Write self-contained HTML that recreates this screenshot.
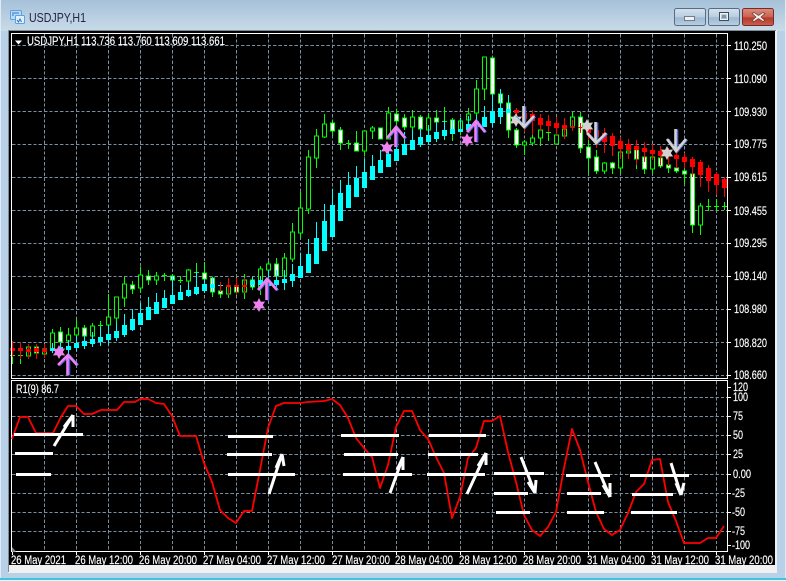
<!DOCTYPE html>
<html><head><meta charset="utf-8"><title>USDJPY,H1</title>
<style>
html,body{margin:0;padding:0;background:#b9d1e8;width:786px;height:581px;overflow:hidden}
svg{position:absolute;left:0;top:0;display:block}
text{font-family:"Liberation Sans",sans-serif;fill:#fff;font-size:11.5px;stroke:#fff;stroke-width:.15px}
</style></head><body>
<svg width="786" height="581" viewBox="0 0 786 581" xmlns="http://www.w3.org/2000/svg">
<defs>
<linearGradient id="bg" x1="0" y1="0" x2="0" y2="1"><stop offset="0" stop-color="#a6c1d9"/><stop offset="1" stop-color="#c9dbe9"/></linearGradient>
<linearGradient id="bn" x1="0" y1="0" x2="0" y2="1"><stop offset="0" stop-color="#d5e2ee"/><stop offset=".5" stop-color="#b7cde0"/><stop offset=".55" stop-color="#9db8d0"/><stop offset="1" stop-color="#b9d0e3"/></linearGradient>
<linearGradient id="cl" x1="0" y1="0" x2="0" y2="1"><stop offset="0" stop-color="#dc8d80"/><stop offset=".5" stop-color="#c9624f"/><stop offset=".55" stop-color="#b5392c"/><stop offset="1" stop-color="#c8604c"/></linearGradient>
<path id="s" d="M0-7 1.900-3.300 6.100-3.500 3.800 0 6.100 3.500 1.900 3.300 0 7-1.900 3.300-6.100 3.500-3.800 0-6.100-3.500-1.900-3.300Z"/>
</defs>
<rect width="786" height="581" fill="#b9d1e8"/>
<rect width="786" height="31" fill="url(#bg)"/>
<rect x="0" y="0" width="1" height="578" fill="#dfeaf3"/>
<rect x="785" y="0" width="1" height="578" fill="#dfeaf3"/>
<rect x="0" y="578" width="786" height="3" fill="#3cc6d8"/>
<rect x="0" y="580" width="786" height="1" fill="#e8f4f8"/>
<rect x="8" y="30" width="769" height="543" fill="#f0f0f0"/>
<rect x="8" y="30" width="768" height="1" fill="#7e8a96"/>
<rect x="8" y="30" width="1" height="542" fill="#7e8a96"/>
<rect x="9" y="31" width="766" height="534" fill="#000"/>

<!-- title -->
<g>
<rect x="10.500" y="10.500" width="11" height="9" rx="1" fill="#b9dcf6" stroke="#5f9fe0"/>
<rect x="15.500" y="15.500" width="9" height="8" rx="1" fill="#dff0fc" stroke="#5f9fe0"/>
<path d="M12 13h7M12 15h2M17 20l1.500 2 1.500-3 1.500 3" stroke="#2f6fd0" fill="none"/>
</g>
<text x="29" y="22" textLength="57" lengthAdjust="spacingAndGlyphs" style="font-size:12.500px;fill:#252347;stroke:none">USDJPY,H1</text>

<!-- buttons -->
<rect x="674.500" y="8.500" width="31" height="17" rx="2" fill="url(#bn)" stroke="#5b6c80"/>
<rect x="684.500" y="16.500" width="10" height="4" fill="#eef2f6" stroke="#5b6670" stroke-width=".8"/>
<rect x="708.500" y="8.500" width="31" height="17" rx="2" fill="url(#bn)" stroke="#5b6c80"/>
<rect x="719.500" y="12.500" width="9" height="8" fill="none" stroke="#3e4a56" stroke-width="1"/>
<rect x="720.500" y="13.500" width="7" height="6" fill="none" stroke="#eef2f6" stroke-width="1"/>
<rect x="722" y="15" width="4" height="3" fill="#7f95aa"/>
<rect x="742.500" y="8.500" width="31" height="17" rx="2" fill="url(#cl)" stroke="#7a2a25"/>
<path d="M754 12.500l4.500 3 4.500-3 2 1-4 3.500 4 3.500-2 1-4.500-3-4.500 3-2-1 4-3.500-4-3.500Z" fill="#f4f0ee" stroke="#6e3430" stroke-width=".7"/>

<!-- grid -->
<g stroke="#7b8da0" stroke-width="1" stroke-dasharray="3.330 2" fill="none" shape-rendering="crispEdges">
<path d="M12 45.500H728M12 78.500H728M12 111.500H728M12 144.500H728M12 177.500H728M12 210.500H728M12 243.500H728M12 276.500H728M12 309.500H728M12 342.500H728M12 375.500H728"/>
<path d="M44.500 34V378M76.500 34V378M108.500 34V378M140.500 34V378M172.500 34V378M204.500 34V378M236.500 34V378M268.500 34V378M300.500 34V378M332.500 34V378M364.500 34V378M396.500 34V378M428.500 34V378M460.500 34V378M492.500 34V378M524.500 34V378M556.500 34V378M588.500 34V378M620.500 34V378M652.500 34V378M684.500 34V378M716.500 34V378"/>
<path d="M12 397.500H728M12 416.500H728M12 435.500H728M12 454.500H728M12 474.500H728M12 493.500H728M12 512.500H728M12 531.500H728"/>
<path d="M44.500 381V551M76.500 381V551M108.500 381V551M140.500 381V551M172.500 381V551M204.500 381V551M236.500 381V551M268.500 381V551M300.500 381V551M332.500 381V551M364.500 381V551M396.500 381V551M428.500 381V551M460.500 381V551M492.500 381V551M524.500 381V551M556.500 381V551M588.500 381V551M620.500 381V551M652.500 381V551M684.500 381V551M716.500 381V551"/>
</g>

<!-- real candles -->
<g shape-rendering="crispEdges">
<path fill="none" stroke="#0f0" d="M12.500 350V364M20.500 352V364M28.500 344V359M36.500 344V359M44.500 344V358M52.500 329V352M60.500 327V345M68.500 328V345M76.500 319V340M84.500 325V340M92.500 323V340M100.500 321V335M108.500 294V330M116.500 297V325M124.500 277V307M132.500 281V294M140.500 267V293M148.500 270V285M156.500 272V285M164.500 273V281M172.500 274V285M180.500 276V283M188.500 269V283M196.500 263V285M204.500 262V290M212.500 277V297M220.500 287V298M228.500 278V298M236.500 277V296M244.500 274V299M252.500 277V290M260.500 266V295M268.500 261V275M276.500 258V280M284.500 253V280M292.500 223V262M300.500 192V238M308.500 150V214M316.500 129V168M324.500 114V138M332.500 120V136M340.500 127V150M348.500 140V149M356.500 131V151M364.500 131V156M372.500 126V139M380.500 128V139M388.500 107V139M396.500 109V125M404.500 114V130M412.500 110V130M420.500 115V135M428.500 113V140M436.500 110V125M444.500 107V140M452.500 118V141M460.500 118V135M468.500 108V130M476.500 80V120M484.500 57V100M492.500 57V100M500.500 89V110M508.500 95V138M516.500 128V148M524.500 140V155M532.500 135V146M540.500 125V146M548.500 127V141M556.500 120V144M564.500 125V138M572.500 112V131M580.500 112V153M588.500 140V173M596.500 150V174M604.500 162V174M612.500 162V174M620.500 145V174M628.500 145V155M636.500 150V169M644.500 155V174M652.500 155V174M660.500 157V168M668.500 163V173M676.500 166V173M684.500 169V184M692.500 172V233M700.500 203V235M708.500 199V211M716.500 199V211M724.500 202V210 M10 355.500H15M18 355.500H23M98 325.500H103M162 275.500H167M178 280.500H183M194 272.500H199M346 143.500H351M442 121.500H447M546 132.500H551M706 206.500H711M714 206.500H719M722 206.500H727"/>
<path fill="#000" stroke="#0f0" d="M26.500 347h4v9h-4zM42.500 349h4v5h-4zM50.500 333h4v16h-4zM66.500 335h4v6h-4zM74.500 328h4v7h-4zM90.500 326h4v10h-4zM106.500 317h4v8h-4zM114.500 297h4v21h-4zM122.500 284h4v14h-4zM138.500 275h4v13h-4zM154.500 276h4v4h-4zM186.500 270h4v11h-4zM226.500 286h4v8h-4zM242.500 280h4v12h-4zM258.500 269h4v18h-4zM266.500 264h4v6h-4zM282.500 258h4v18h-4zM290.500 232h4v27h-4zM298.500 208h4v25h-4zM306.500 157h4v52h-4zM314.500 136h4v22h-4zM322.500 124h4v13h-4zM362.500 131h4v20h-4zM370.500 128h4v3h-4zM386.500 113h4v26h-4zM410.500 117h4v10h-4zM426.500 118h4v12h-4zM458.500 121h4v9h-4zM466.500 114h4v6h-4zM474.500 89h4v24h-4zM482.500 57h4v32h-4zM522.500 142h4v3h-4zM530.500 138h4v5h-4zM538.500 130h4v8h-4zM554.500 135h4v9h-4zM562.500 129h4v7h-4zM570.500 117h4v10h-4zM602.500 163h4v8h-4zM618.500 152h4v16h-4zM626.500 151h4v2h-4zM650.500 157h4v12h-4zM698.500 206h4v19h-4z"/>
<path fill="#fff" stroke="#0f0" d="M34.500 347h4v6h-4zM58.500 332h4v10h-4zM82.500 328h4v8h-4zM130.500 285h4v4h-4zM146.500 276h4v4h-4zM170.500 276h4v4h-4zM202.500 273h4v6h-4zM210.500 278h4v14h-4zM218.500 291h4v3h-4zM234.500 286h4v6h-4zM250.500 280h4v7h-4zM274.500 264h4v12h-4zM330.500 123h4v8h-4zM338.500 130h4v13h-4zM354.500 143h4v8h-4zM378.500 128h4v11h-4zM394.500 114h4v7h-4zM402.500 118h4v9h-4zM418.500 117h4v12h-4zM434.500 118h4v4h-4zM450.500 120h4v10h-4zM490.500 58h4v36h-4zM498.500 94h4v9h-4zM506.500 103h4v27h-4zM514.500 130h4v15h-4zM578.500 117h4v31h-4zM586.500 147h4v11h-4zM594.500 157h4v14h-4zM610.500 163h4v5h-4zM634.500 150h4v9h-4zM642.500 157h4v12h-4zM658.500 158h4v8h-4zM666.500 165h4v3h-4zM674.500 168h4v3h-4zM682.500 171h4v3h-4zM690.500 174h4v51h-4z"/>

<!-- HA cyan -->
<path fill="none" stroke="#0ff" d="M52.500 343V353M60.500 343V356M68.500 340V356M76.500 336V351M84.500 335V349M92.500 332V347M100.500 327V346M108.500 325V345M116.500 322V341M124.500 314V337M132.500 309V331M140.500 303V325M148.500 297V320M156.500 293V314M164.500 290V308M172.500 276V304M180.500 285V300M188.500 283V297M196.500 272V295M204.500 279V293M212.500 277V292M252.500 277V288M260.500 276V288M268.500 270V288M276.500 270V290M284.500 270V290M292.500 264V287M300.500 253V278M308.500 239V273M316.500 222V264M324.500 204V251M332.500 189V237M340.500 180V221M348.500 172V208M356.500 166V197M364.500 159V188M372.500 155V180M380.500 150V173M388.500 145V167M396.500 140V161M404.500 132V155M412.500 130V150M420.500 128V147M428.500 125V145M436.500 122V142M444.500 120V139M452.500 120V134M460.500 118V132M468.500 116V130M476.500 115V127M484.500 106V127M492.500 94V127M500.500 89V124M508.500 95V113"/>
<path fill="#0ff" d="M50 348h5v3h-5zM58 347h5v4h-5zM66 346h5v4h-5zM74 343h5v5h-5zM82 341h5v5h-5zM90 339h5v5h-5zM98 337h5v5h-5zM106 334h5v6h-5zM114 331h5v7h-5zM122 325h5v10h-5zM130 319h5v11h-5zM138 313h5v12h-5zM146 307h5v13h-5zM154 302h5v12h-5zM162 298h5v10h-5zM170 295h5v9h-5zM178 292h5v8h-5zM186 290h5v6h-5zM194 287h5v7h-5zM202 284h5v7h-5zM210 284h5v4h-5zM218 285h5v1h-5zM250 281h5v4h-5zM258 280h5v5h-5zM266 282h5v4h-5zM274 280h5v5h-5zM282 279h5v4h-5zM290 274h5v7h-5zM298 266h5v12h-5zM306 254h5v19h-5zM314 238h5v26h-5zM322 221h5v30h-5zM330 205h5v32h-5zM338 193h5v28h-5zM346 185h5v23h-5zM354 178h5v19h-5zM362 172h5v16h-5zM370 166h5v14h-5zM378 160h5v13h-5zM386 154h5v13h-5zM394 149h5v12h-5zM402 144h5v11h-5zM410 140h5v10h-5zM418 137h5v8h-5zM426 135h5v7h-5zM434 132h5v7h-5zM442 130h5v6h-5zM450 129h5v5h-5zM458 129h5v3h-5zM466 124h5v6h-5zM474 121h5v6h-5zM482 117h5v10h-5zM490 111h5v12h-5zM498 108h5v9h-5zM506 109h5v4h-5z"/>

<!-- HA red -->
<path fill="none" stroke="#f00" d="M12.500 341V357M20.500 343V359M28.500 344V359M36.500 344V359M44.500 344V358M220.500 282V292M228.500 278V295M236.500 278V295M244.500 278V293M516.500 108V120M524.500 110V132M532.500 110V135M540.500 114V130M548.500 115V132M556.500 117V135M564.500 118V139M572.500 120V131M580.500 123V133M588.500 125V140M596.500 125V148M604.500 128V153M612.500 133V156M620.500 137V159M628.500 139V159M636.500 140V165M644.500 142V162M652.500 144V160M660.500 146V165M668.500 148V166M676.500 150V168M684.500 153V168M692.500 157V177M700.500 160V187M708.500 165V192M716.500 172V195M724.500 177V197"/>
<path fill="#f00" d="M10 348h5v3h-5zM18 348h5v3h-5zM26 349h5v3h-5zM34 348h5v4h-5zM42 349h5v3h-5zM226 285h5v2h-5zM234 285h5v2h-5zM242 285h5v2h-5zM514 110h5v3h-5zM522 113h5v6h-5zM530 114h5v7h-5zM538 118h5v7h-5zM546 121h5v5h-5zM554 123h5v5h-5zM562 125h5v4h-5zM570 126h5v1h-5zM578 127h5v1h-5zM586 128h5v5h-5zM594 130h5v7h-5zM602 133h5v9h-5zM610 136h5v10h-5zM618 141h5v8h-5zM626 144h5v6h-5zM634 146h5v4h-5zM642 148h5v4h-5zM650 150h5v4h-5zM658 151h5v5h-5zM666 152h5v5h-5zM674 155h5v4h-5zM682 157h5v5h-5zM690 159h5v8h-5zM698 162h5v13h-5zM706 168h5v13h-5zM714 174h5v11h-5zM722 179h5v9h-5z"/>
</g>

<!-- stars -->
<g fill="#ee82ee">
<use href="#s" x="59" y="352"/><use href="#s" x="259" y="305"/><use href="#s" x="387" y="148"/><use href="#s" x="467" y="140"/>
</g>
<g fill="#d3d3d3">
<use href="#s" x="516" y="120"/><use href="#s" x="587" y="126"/><use href="#s" x="667" y="153"/>
</g>

<!-- arrows -->
<g fill="none" stroke-width="2.600" stroke-linejoin="miter">
<g stroke="#4a58e0" transform="translate(1 .4)"><path d="M68 375V356M58 365 68 355 77 365M267 300V280M258 290 267 279 277 290M396 147V128M387 138 396 127 405 138M476 142V122M467 132 476 121 485 132"/></g>
<g stroke="#ee82ee"><path d="M67.500 375V356M58 365 68 355 77 365M266.500 300V280M258 290 267 279 277 290M395.500 147V128M387 138 396 127 405 138M475.500 142V122M467 132 476 121 485 132"/></g>
<g stroke="#5a6ad0" transform="translate(1 .4)"><path d="M524 106V126M514 116 524 127 534 116M596 122V142M587 133 596 143 606 133M676 129V150M667 139 676 151 686 139"/></g>
<g stroke="#d3d3d3"><path d="M523.500 106V126M514 116 524 127 534 116M595.500 122V142M587 133 596 143 606 133M675.500 129V150M667 139 676 151 686 139"/></g>
</g>

<!-- frames -->
<g fill="none" stroke="#fff" shape-rendering="crispEdges">
<rect x="11.500" y="33.500" width="716" height="345"/>
<rect x="11.500" y="380.500" width="716" height="171"/>
</g>
<path d="M12 552V547L16 551.500Z" fill="#778899"/>

<!-- oscillator -->
<path fill="none" stroke="#f00" stroke-width="1.800" stroke-linejoin="round" d="M12 439 20 417 28 417 36 433 53 433 61 417 68 406 76 406 84 414 92 414 101 410 117 410 124 402 135 402 140 399 148 399 156 403 164 404 172 416 180 436 196 436 204 463 212 482 220 510 228 518 236 523 244 511 252 511 260 470 268 428 276 406 284 403 300 403 308 402 324 401 332 399 340 405 348 418 356 438 364 448 372 457 380 488 388 465 396 427 404 411 412 411 420 430 428 439 436 457 444 473 452 518 460 497 468 458 476 448 484 421 492 421 500 416 508 452 516 482 524 515 532 530 540 536 548 527 556 512 564 468 572 429 580 450 588 482 596 512 604 529 612 535 620 530 628 513 636 492 644 484 652 460 660 459 668 502 676 521 684 543 700 543 708 538 716 538 724 526"/>

<!-- white levels -->
<g stroke="#fff" stroke-width="3" shape-rendering="crispEdges" fill="none">
<path d="M14 434.500H83M15 453.500H53M16 474.500H51M228 436.500H273M227 454.500H272M228 474.500H295M341 435.500H399M344 454.500H398M343 474.500H412M429 435.500H486M428 454.500H478M427 474.500H485M494 473.500H544M494 493.500H528M496 512.500H530M566 475.500H610M567 493.500H601M567 512.500H604M630 475.500H689M632 494.500H673M631 512.500H677"/>
</g>
<g stroke="#fff" stroke-width="3" fill="none">
<path d="M54 446 73 415M73 415V427M73 415 64 427"/>
<path d="M269 494 282 454M282 454 284 466M282 454 276 468"/>
<path d="M390 493 403 457M403 457V470M403 457 397 470"/>
<path d="M467 494 486 453M486 453V465M486 453 478 466"/>
<path d="M521 457 535 493M535 493 536 480M535 493 528 482"/>
<path d="M595 462 610 497M610 497V483M610 497 603 485"/>
<path d="M671 463 681 495M681 495 684 483M681 495 676 483"/>
</g>

<!-- ticks -->
<g stroke="#fff" shape-rendering="crispEdges" fill="none">
<path d="M728 45.500h3M728 78.500h3M728 111.500h3M728 144.500h3M728 177.500h3M728 210.500h3M728 243.500h3M728 276.500h3M728 309.500h3M728 342.500h3M728 375.500h3M728 387.500h3M728 397.500h3M728 416.500h3M728 435.500h3M728 454.500h3M728 474.500h3M728 493.500h3M728 512.500h3M728 531.500h3M728 545.500h3"/>
<path d="M12.500 552v3M76.500 552v3M140.500 552v3M204.500 552v3M268.500 552v3M332.500 552v3M396.500 552v3M460.500 552v3M524.500 552v3M588.500 552v3M652.500 552v3M716.500 552v3"/>
</g>

<!-- chart text -->
<path d="M15 40.500h7l-3.500 4Z" fill="#fff"/>
<text x="27" y="45" textLength="198" lengthAdjust="spacingAndGlyphs">USDJPY,H1  113.736 113.760 113.609 113.661</text>
<text x="16" y="393" textLength="43" lengthAdjust="spacingAndGlyphs">R1(9) 86.7</text>

<g>
<text x="734" y="50" textLength="33" lengthAdjust="spacingAndGlyphs">110.250</text>
<text x="734" y="83" textLength="33" lengthAdjust="spacingAndGlyphs">110.090</text>
<text x="734" y="116" textLength="33" lengthAdjust="spacingAndGlyphs">109.930</text>
<text x="734" y="148" textLength="33" lengthAdjust="spacingAndGlyphs">109.775</text>
<text x="734" y="181" textLength="33" lengthAdjust="spacingAndGlyphs">109.615</text>
<text x="734" y="215" textLength="33" lengthAdjust="spacingAndGlyphs">109.455</text>
<text x="734" y="247" textLength="33" lengthAdjust="spacingAndGlyphs">109.295</text>
<text x="734" y="280" textLength="33" lengthAdjust="spacingAndGlyphs">109.140</text>
<text x="734" y="313" textLength="33" lengthAdjust="spacingAndGlyphs">108.980</text>
<text x="734" y="347" textLength="33" lengthAdjust="spacingAndGlyphs">108.820</text>
<text x="734" y="379" textLength="33" lengthAdjust="spacingAndGlyphs">108.660</text>
<text x="733" y="391" textLength="15" lengthAdjust="spacingAndGlyphs">120</text>
<text x="733" y="401" textLength="15" lengthAdjust="spacingAndGlyphs">100</text>
<text x="733" y="420" textLength="10" lengthAdjust="spacingAndGlyphs">75</text>
<text x="733" y="439" textLength="10" lengthAdjust="spacingAndGlyphs">50</text>
<text x="733" y="458" textLength="10" lengthAdjust="spacingAndGlyphs">25</text>
<text x="733" y="478" textLength="18" lengthAdjust="spacingAndGlyphs">0.00</text>
<text x="732" y="497" textLength="13" lengthAdjust="spacingAndGlyphs">-25</text>
<text x="732" y="516" textLength="13" lengthAdjust="spacingAndGlyphs">-50</text>
<text x="732" y="535" textLength="13" lengthAdjust="spacingAndGlyphs">-75</text>
<text x="732" y="549" textLength="18" lengthAdjust="spacingAndGlyphs">-100</text>
</g>
<g>
<text x="11" y="564" textLength="55" lengthAdjust="spacingAndGlyphs">26 May 2021</text>
<text x="75" y="564" textLength="58" lengthAdjust="spacingAndGlyphs">26 May 12:00</text>
<text x="139" y="564" textLength="58" lengthAdjust="spacingAndGlyphs">26 May 20:00</text>
<text x="203" y="564" textLength="58" lengthAdjust="spacingAndGlyphs">27 May 04:00</text>
<text x="267" y="564" textLength="58" lengthAdjust="spacingAndGlyphs">27 May 12:00</text>
<text x="332" y="564" textLength="58" lengthAdjust="spacingAndGlyphs">27 May 20:00</text>
<text x="395" y="564" textLength="58" lengthAdjust="spacingAndGlyphs">28 May 04:00</text>
<text x="459" y="564" textLength="58" lengthAdjust="spacingAndGlyphs">28 May 12:00</text>
<text x="523" y="564" textLength="58" lengthAdjust="spacingAndGlyphs">28 May 20:00</text>
<text x="587" y="564" textLength="58" lengthAdjust="spacingAndGlyphs">31 May 04:00</text>
<text x="651" y="564" textLength="58" lengthAdjust="spacingAndGlyphs">31 May 12:00</text>
<text x="715" y="564" textLength="58" lengthAdjust="spacingAndGlyphs">31 May 20:00</text>
</g>
</svg>
</body></html>
